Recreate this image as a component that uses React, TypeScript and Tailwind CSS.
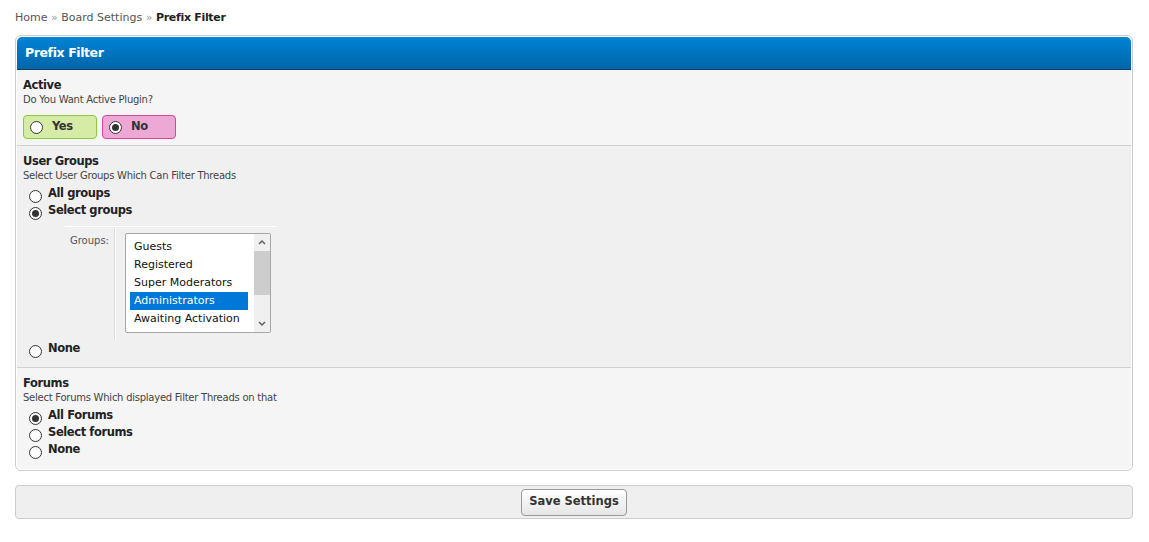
import React from 'react';

const Radio: React.FC<{ checked?: boolean }> = ({ checked }) => (
  <div className="flex w-[13px] h-[13px] shrink-0 items-center justify-center rounded-full border border-[#333] bg-white">
    {checked && <div className="w-[7px] h-[7px] rounded-full bg-[#333]" />}
  </div>
);

const Option: React.FC<{ label: string; checked?: boolean }> = ({ label, checked }) => (
  <div className="flex items-start h-[17px] pl-[6px]">
    <div className="mt-[5px]">
      <Radio checked={checked} />
    </div>
    <div className="ml-[6px] font-bold text-[11.5px] tracking-[-0.4px] leading-[17px] text-[#222]">{label}</div>
  </div>
);

const groups = ['Guests', 'Registered', 'Super Moderators', 'Administrators', 'Awaiting Activation'];

export default function App() {
  return (
    <div className="min-h-screen bg-white font-['DejaVu_Sans',sans-serif] text-[#333] pl-[15px] pr-[16px] pt-[11px]">
      {/* breadcrumb */}
      <div className="text-[11px] leading-[14px] text-[#555]">
        Home <span className="text-[#999]">»</span> Board Settings <span className="text-[#999]">»</span>{' '}
        <span className="font-bold text-[#222] tracking-[-0.3px]">Prefix Filter</span>
      </div>

      <div className="mt-[10px] border border-[#cccccc] rounded-[6px] bg-white p-[1px]">
        <div className="h-[33px] rounded-t-[5px] bg-gradient-to-b from-[#0084d6] to-[#0065a9] border-b border-[#0d3f66] px-[8px] flex items-center">
          <span className="text-white font-bold text-[12.5px] tracking-[-0.4px]">Prefix Filter</span>
        </div>

        {/* Active */}
        <div className="bg-[#f5f5f5] border-b border-[#d0d0d0] px-[6px] pt-[8px] pb-[6px]">
          <div className="font-bold text-[11.5px] tracking-[-0.4px] leading-[15px] text-[#222]">Active</div>
          <div className="text-[10px] tracking-[-0.25px] leading-[13px] text-[#444]">Do You Want Active Plugin?</div>
          <div className="mt-[9px] flex gap-[5px]">
            <div className="w-[74px] h-[24px] rounded-[4px] border border-[#8dc93e] bg-[#d6eca6] flex items-center pl-[6px]">
              <Radio />
              <span className="ml-[9px] font-bold text-[11.5px] tracking-[-0.4px] text-[#333]">Yes</span>
            </div>
            <div className="w-[74px] h-[24px] rounded-[4px] border border-[#d2479c] bg-[#eea8d6] flex items-center pl-[6px]">
              <Radio checked />
              <span className="ml-[9px] font-bold text-[11.5px] tracking-[-0.4px] text-[#333]">No</span>
            </div>
          </div>
        </div>

        {/* User Groups */}
        <div className="bg-[#f0f0f0] border-b border-[#d0d0d0] px-[6px] pt-[8px] pb-[10px]">
          <div className="font-bold text-[11.5px] tracking-[-0.4px] leading-[15px] text-[#222]">User Groups</div>
          <div className="text-[10px] tracking-[-0.25px] leading-[13px] text-[#444]">Select User Groups Which Can Filter Threads</div>
          <div className="mt-[3px]">
            <Option label="All groups" />
            <Option label="Select groups" checked />
          </div>
          <div className="ml-[42px] mt-[7px] w-[212px] flex border-t border-white">
            <div className="w-[50px] border-r border-[#dcdcdc] text-right pr-[5px] pt-[7px] text-[10px] leading-[14px] text-[#555]">
              Groups:
            </div>
            <div className="border-l border-white pl-[9px] pt-[6px] pb-[7px]">
              <div className="relative w-[146px] h-[100px] rounded-[2px] border border-[#a6a6a6] bg-white overflow-hidden">
                <div className="pt-[4px] pl-[4px] w-[122px]">
                  {groups.map((g) => (
                    <div
                      key={g}
                      className={
                        g === 'Administrators'
                          ? 'h-[18px] leading-[18px] pl-[4px] text-[11px] bg-[#0078d7] text-white whitespace-nowrap'
                          : 'h-[18px] leading-[18px] pl-[4px] text-[11px] text-[#111] whitespace-nowrap'
                      }
                    >
                      {g}
                    </div>
                  ))}
                </div>
                <div className="absolute right-0 top-0 bottom-0 w-[16px] bg-[#f0f0f0]">
                  <svg className="absolute left-[4px] top-[5px]" width="8" height="6" viewBox="0 0 8 6">
                    <path d="M1 5 L4 2 L7 5" fill="none" stroke="#606060" strokeWidth="1.5" />
                  </svg>
                  <div className="absolute left-0 right-0 top-[17px] h-[44px] bg-[#cdcdcd]" />
                  <svg className="absolute left-[4px] bottom-[5px]" width="8" height="6" viewBox="0 0 8 6">
                    <path d="M1 1 L4 4 L7 1" fill="none" stroke="#606060" strokeWidth="1.5" />
                  </svg>
                </div>
              </div>
            </div>
          </div>
          <div>
            <Option label="None" />
          </div>
        </div>

        {/* Forums */}
        <div className="bg-[#f5f5f5] rounded-b-[5px] px-[6px] pt-[8px] pb-[11px]">
          <div className="font-bold text-[11.5px] tracking-[-0.4px] leading-[15px] text-[#222]">Forums</div>
          <div className="text-[10px] tracking-[-0.25px] leading-[13px] text-[#444]">Select Forums Which displayed Filter Threads on that</div>
          <div className="mt-[3px]">
            <Option label="All Forums" checked />
            <Option label="Select forums" />
            <Option label="None" />
          </div>
        </div>
      </div>

      <div className="mt-[14px] h-[34px] rounded-[4px] border border-[#cccccc] bg-[#efefef] flex items-center justify-center">
        <button className="h-[27px] px-[7px] rounded-[4px] border border-[#999] bg-gradient-to-b from-white to-[#e6e6e6] font-bold text-[11.5px] text-[#333]">
          Save Settings
        </button>
      </div>
    </div>
  );
}
